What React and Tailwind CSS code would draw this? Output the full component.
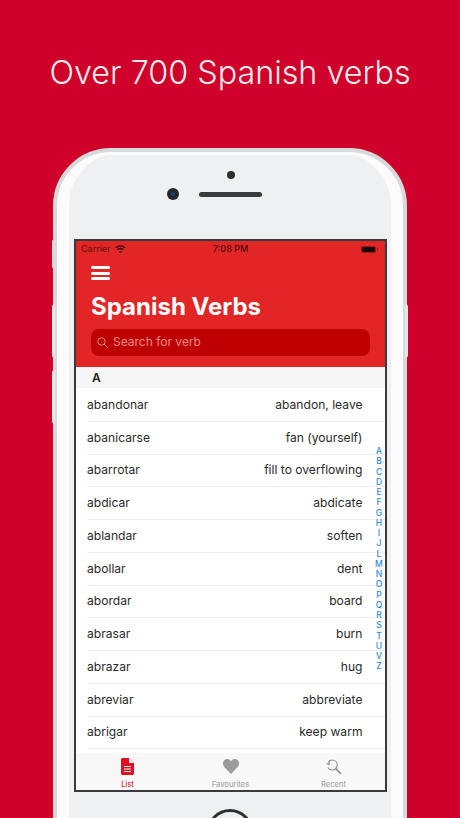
import React from 'react';

const verbs = [
  ['abandonar', 'abandon, leave'],
  ['abanicarse', 'fan (yourself)'],
  ['abarrotar', 'fill to overflowing'],
  ['abdicar', 'abdicate'],
  ['ablandar', 'soften'],
  ['abollar', 'dent'],
  ['abordar', 'board'],
  ['abrasar', 'burn'],
  ['abrazar', 'hug'],
  ['abreviar', 'abbreviate'],
  ['abrigar', 'keep warm'],
];

const letters = 'ABCDEFGHIJLMNOPQRSTUVZ'.split('');

const App = () => {
  return (
    <div className="relative h-[818px] w-[460px] overflow-hidden bg-[#cf0029] font-['Inter',sans-serif]">
      {/* Headline */}
      <h1 className="h-[148px] pt-[48px] text-center text-[32.3px] leading-[50px] font-light text-[#fbeef0]">
        Over 700 Spanish verbs
      </h1>

      {/* Phone */}
      <div className="relative mx-auto h-[760px] w-[354px] rounded-[58px] border-[4px] border-[#d8d9db] bg-[#eff0f2] shadow-[inset_12px_0_0_#fbfbfb,inset_-12px_0_0_#fbfbfb,inset_0_3px_0_#fbfbfb]">
        <div className="absolute left-[-5px] top-[87px] h-[30px] w-[3px] rounded-l bg-[#d9dadc]"></div>
        <div className="absolute left-[-5px] top-[152px] h-[54px] w-[3px] rounded-l bg-[#e5e6e8]"></div>
        <div className="absolute left-[-5px] top-[218px] h-[54px] w-[3px] rounded-l bg-[#e5e6e8]"></div>
        <div className="absolute right-[-5px] top-[152px] h-[54px] w-[3px] rounded-r bg-[#e5e6e8]"></div>

        {/* Camera and speaker */}
        <div className="relative h-[87px]">
          <div className="absolute left-[170px] top-[19px] h-2 w-2 rounded-full bg-[#2f3033]"></div>
          <div className="absolute left-[110px] top-[36px] flex h-3 w-3 items-center justify-center rounded-full bg-[#26272b]">
            <div className="h-1 w-1 rounded-full bg-[#1d3f86]"></div>
          </div>
          <div className="absolute left-[142px] top-[40px] h-[5px] w-[63px] rounded-full bg-[#3a3b3f]"></div>
        </div>

        {/* Screen */}
        <div className="ml-[17px] flex h-[553px] w-[313px] flex-col border-2 border-[#3b3b3d] bg-white">
          <div className="h-[126px] bg-[#e22626] px-[15px]">
            <div className="-mx-[10px] flex h-[14px] items-center justify-between pt-[2px] text-[9px] text-[#5e1111]">
              <div className="flex w-[90px] items-center gap-1">
                <span>Carrier</span>
                <svg width="11" height="8" viewBox="0 0 11 8" fill="none" stroke="#3a0a0a" strokeWidth="1.4">
                  <path d="M0.8 2.8C3.6 0.3 7.4 0.3 10.2 2.8" />
                  <path d="M2.6 4.6C4.3 3.2 6.7 3.2 8.4 4.6" />
                  <path d="M4.5 6.4L5.5 7.4L6.5 6.4" fill="#3a0a0a" />
                </svg>
              </div>
              <span className="font-medium text-[#4a0c0c]">7:08 PM</span>
              <div className="flex w-[90px] items-center justify-end pr-[2px]">
                <div className="h-[7px] w-[15px] rounded-[2px] border border-[#a01a1a] bg-[#1a0505]"></div>
                <div className="ml-px h-[3px] w-px bg-[#a01a1a]"></div>
              </div>
            </div>
            <div className="mt-[11px] flex h-[14px] w-[19px] flex-col justify-between">
              <div className="h-[3px] rounded-sm bg-white"></div>
              <div className="h-[3px] rounded-sm bg-white"></div>
              <div className="h-[3px] rounded-sm bg-white"></div>
            </div>
            <div className="mt-[10px] text-[24px] leading-[34px] font-bold text-white">Spanish Verbs</div>
            <div className="mt-[5px] flex h-[27px] w-[279px] items-center gap-[5px] rounded-lg bg-[#bf0000] px-[6px] pb-px text-[12px] text-[#eb8a8a]">
              <svg width="11" height="11" viewBox="0 0 11 11" fill="none" stroke="#e88080" strokeWidth="1">
                <circle cx="4.5" cy="4.5" r="3.7" />
                <path d="M7.3 7.3L10.3 10.3" strokeLinecap="round" />
              </svg>
              <span>Search for verb</span>
            </div>
          </div>

          <div className="h-[21px] bg-[#f6f6f7] pl-[16px] text-[12px] leading-[22px] font-semibold text-[#222222]">A</div>

          {/* Verb list */}
          <div className="relative flex-1 overflow-hidden pt-px">
            {verbs.map((verb) => (
              <div key={verb[0]} className="ml-[11px] flex h-[32.75px] items-center justify-between border-b border-[#eeeeef] pr-[22.5px] text-[12.1px] text-[#2a2a2a]">
                <span>{verb[0]}</span>
                <span>{verb[1]}</span>
              </div>
            ))}

            <div className="absolute right-[1px] top-[58px] flex w-[10px] flex-col items-center">
              {letters.map((letter) => (
                <div key={letter} className="h-[10.25px] text-[8.5px] leading-[10px] font-medium text-[#2f8ae6]">{letter}</div>
              ))}
            </div>
          </div>

          {/* Tab bar */}
          <div className="flex h-[37px] bg-[#f8f8f8]">
            <div className="flex flex-1 flex-col items-center pt-[5px]">
              <svg width="13" height="17" viewBox="0 0 13 17">
                <path d="M1.5 0H8L13 5V15.5C13 16.3 12.3 17 11.5 17H1.5C.7 17 0 16.3 0 15.5V1.5C0 .7.7 0 1.5 0Z" fill="#df0f1f" />
                <path d="M8 0V4C8 4.6 8.4 5 9 5H13Z" fill="#f8f8f8" />
                <path d="M3 8.5H10M3 11H10M3 13.5H10" stroke="#f8f8f8" strokeWidth="1.2" />
              </svg>
              <span className="mt-[5px] text-[7.5px] leading-[9px] font-medium text-[#d8283a]">List</span>
            </div>
            <div className="flex flex-1 flex-col items-center pt-[6px]">
              <svg width="16" height="15" viewBox="0 0 16 15">
                <path d="M8 15L1.5 8.3C-.5 6.2-.5 3.1 1.3 1.3 3.1-.4 6.1-.4 8 2.2 9.9-.4 12.9-.4 14.7 1.3 16.5 3.1 16.5 6.2 14.5 8.3Z" fill="#9b9b9b" />
              </svg>
              <span className="mt-[6px] text-[7.5px] leading-[9px] font-medium text-[#a9a9a9]">Favourites</span>
            </div>
            <div className="flex flex-1 flex-col items-center pt-[6px]">
              <svg width="15" height="15" viewBox="0 0 15 15" fill="none" stroke="#8d8d8d" strokeWidth="1.1">
                <path d="M2.3 3.2C3.3 1.7 4.6 1 6.2 1 9 1 11.2 3.2 11.2 6S9 11 6.2 11C4.2 11 2.7 10 1.8 8.5" />
                <path d="M9.8 9.6L14.4 14.4" strokeWidth="1.6" strokeLinecap="round" />
                <path d="M0.6 4.6L3 5.6L3.4 2.6" />
              </svg>
              <span className="mt-[6px] text-[7.5px] leading-[9px] font-medium text-[#a9a9a9]">Recent</span>
            </div>
          </div>
        </div>

        {/* Home button, cut by the page edge */}
        <div className="mx-auto mt-[17px] h-[46px] w-[46px] rounded-full border-[3px] border-[#2f3033]"></div>
      </div>
    </div>
  );
};

export default App;
